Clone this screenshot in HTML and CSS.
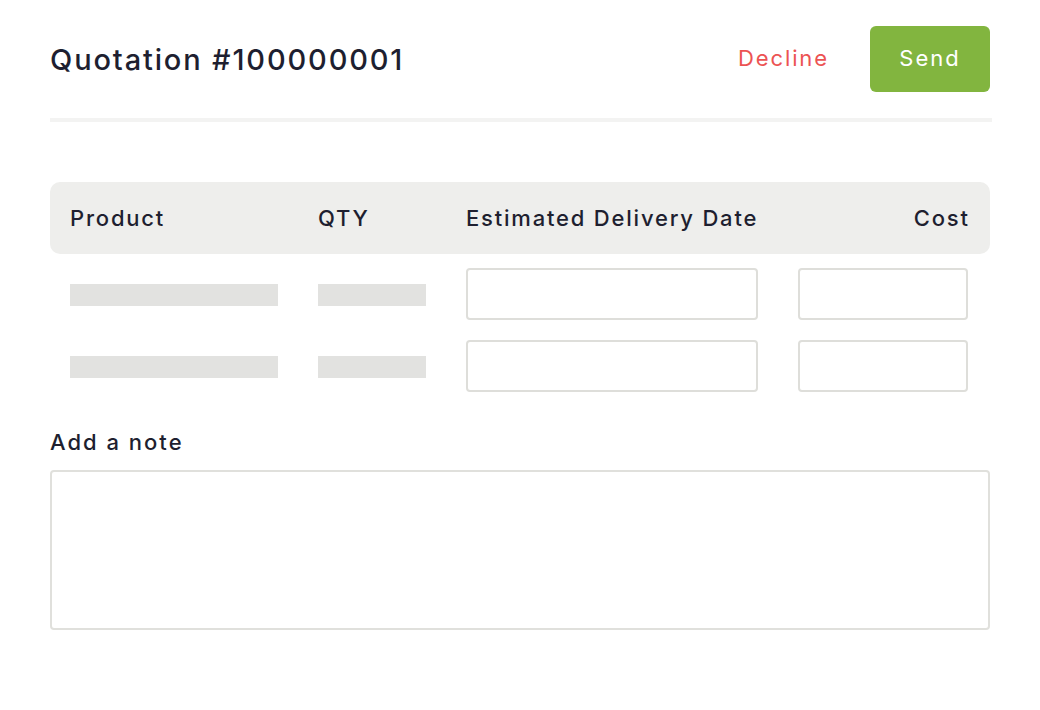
FILE: index.html
```html
<!DOCTYPE html>
<html>
<head>
<meta charset="utf-8">
<link rel="stylesheet" href="styles.css">
</head>
<body>
<div class="page">
  <header class="head">
    <h1 class="title">Quotation #100000001</h1>
    <div class="actions">
      <button class="decline">Decline</button>
      <button class="send">Send</button>
    </div>
  </header>
  <div class="divider"></div>
  <div class="table">
    <div class="row thead">
      <div>Product</div>
      <div>QTY</div>
      <div>Estimated Delivery Date</div>
      <div class="right">Cost</div>
    </div>
    <div class="row body">
      <div><span class="bar wide"></span></div>
      <div><span class="bar narrow"></span></div>
      <div><input class="field date" type="text"></div>
      <div><input class="field cost" type="text"></div>
    </div>
    <div class="row body">
      <div><span class="bar wide"></span></div>
      <div><span class="bar narrow"></span></div>
      <div><input class="field date" type="text"></div>
      <div><input class="field cost" type="text"></div>
    </div>
  </div>
  <label class="note-label">Add a note</label>
  <textarea class="note"></textarea>
</div>
</body>
</html>
```
FILE: styles.css
```css
* { box-sizing: border-box; }
html, body { margin: 0; padding: 0; background: #fff; }
body { font-family: "Inter", "Noto Sans", sans-serif; color: #1e1f30; }
.page { width: 940px; margin-left: 50px; padding-top: 26px; }
.head { display: flex; align-items: center; justify-content: space-between; height: 66px; }
.title { margin: 0; font-size: 29px; font-weight: 500; letter-spacing: 1.85px; }
.actions { display: flex; align-items: center; gap: 41px; }
.decline { background: none; border: 0; padding: 0 0 2px; font: inherit; font-size: 22px; letter-spacing: 1.9px; color: #ec5353; cursor: pointer; }
.send { width: 120px; height: 66px; border: 0; border-radius: 6px; background: #82b53f; color: #fff; font: inherit; font-size: 22px; letter-spacing: 2px; padding: 0 0 2px; cursor: pointer; }
.divider { height: 4px; background: #f3f3f2; margin-top: 26px; width: 942px; }
.table { margin-top: 60px; }
.row { display: grid; grid-template-columns: 248px 148px 332px 170px; padding: 0 21px 0 20px; align-items: center; }
.thead { height: 72px; background: #eeeeec; border-radius: 10px; font-size: 22px; font-weight: 500; letter-spacing: 1.8px; }
.right { text-align: right; margin-right: -1.8px; }
.body { margin-top: 14px; }
.body + .body { margin-top: 20px; }
.bar { display: block; height: 22px; margin-top: 1px; background: #e2e2e0; }
.bar.wide { width: 208px; }
.bar.narrow { width: 108px; }
.field { display: block; height: 52px; border: 2px solid #dededa; border-radius: 4px; background: #fff; outline: none; }
.field.date { width: 292px; }
.field.cost { width: 170px; }
.note-label { display: block; margin-top: 37px; font-size: 22px; font-weight: 500; line-height: 26px; letter-spacing: 2px; }
.note { display: block; margin-top: 15px; width: 940px; height: 160px; border: 2px solid #e0e0dc; border-radius: 4px; resize: none; outline: none; }
```
